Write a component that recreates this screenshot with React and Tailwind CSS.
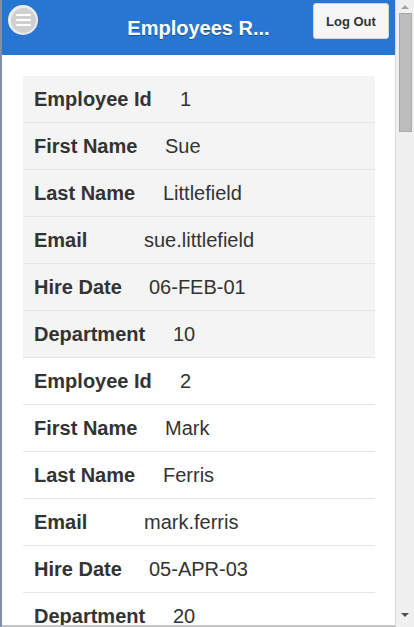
const employees = [
  { id: 1, first: 'Sue', last: 'Littlefield', email: 'sue.littlefield', hire: '06-FEB-01', dept: 10 },
  { id: 2, first: 'Mark', last: 'Ferris', email: 'mark.ferris', hire: '05-APR-03', dept: 20 },
];

// label widths keep the value columns where the original puts them
const fields = [
  { key: 'id', label: 'Employee Id', w: 'w-[146px]' },
  { key: 'first', label: 'First Name', w: 'w-[131px]' },
  { key: 'last', label: 'Last Name', w: 'w-[129px]' },
  { key: 'email', label: 'Email', w: 'w-[110px]' },
  { key: 'hire', label: 'Hire Date', w: 'w-[115px]' },
  { key: 'dept', label: 'Department', w: 'w-[139px]' },
];

function MenuButton() {
  return (
    <div className="w-[30px] h-[30px] rounded-full bg-[#ececec] flex items-center justify-center">
      <div className="w-[25px] h-[25px] rounded-full bg-[#d0d0d0] flex flex-col items-center justify-center gap-[3px]">
        <span className="block w-[15px] h-[2px] bg-white rounded" />
        <span className="block w-[15px] h-[2px] bg-white rounded" />
        <span className="block w-[15px] h-[2px] bg-white rounded" />
      </div>
    </div>
  );
}

function Header() {
  return (
    <div className="relative h-[55px] shrink-0 bg-[#2777d2] flex items-center justify-center">
      <div className="absolute left-[6px] top-[5px]">
        <MenuButton />
      </div>
      <h1 className="text-white text-[20px] font-bold leading-none [text-shadow:0_1px_0_#1d4f8a]">
        Employees R...
      </h1>
      <button className="absolute right-[6px] top-[3px] w-[76px] h-[36px] bg-[#f6f6f6] border border-[#d4d4d4] rounded-[3px] text-[#333] text-[13px] font-bold leading-none">
        Log Out
      </button>
    </div>
  );
}

function Record({ emp, shaded }) {
  return (
    <div className={shaded ? 'bg-[#f4f4f4]' : 'bg-white'}>
      {fields.map((f) => (
        <div
          key={f.key}
          className="h-[47px] flex items-center pl-[11px] border-b border-[#e6e6e6] text-[20px] text-[#333]"
        >
          <span className={`${f.w} font-bold shrink-0`}>{f.label}</span>
          <span>{emp[f.key]}</span>
        </div>
      ))}
    </div>
  );
}

function Scrollbar() {
  return (
    <div className="w-[19px] h-full shrink-0 bg-[#f0f0f0] border-l border-[#dadada] flex flex-col items-center">
      <div className="h-[13px] flex items-center">
        <span className="block w-0 h-0 border-x-[4px] border-x-transparent border-b-[4px] border-b-[#a3a3a3]" />
      </div>
      <div className="w-[13px] h-[119px] bg-[#bcbcbc] border border-[#a9a9a9]" />
      <div className="flex-1" />
      <div className="h-[16px] flex items-start pt-[2px]">
        <span className="block w-0 h-0 border-x-[4px] border-x-transparent border-t-[4px] border-t-[#505050]" />
      </div>
    </div>
  );
}

export default function App() {
  return (
    <div className="w-[414px] h-[627px] flex overflow-hidden bg-white font-['Liberation_Sans',Arial,sans-serif]">
      <div className="w-[2px] h-full shrink-0 bg-[#7f90a8]" />
      <div className="flex-1 h-full flex flex-col overflow-hidden border-b-2 border-[#c6c6c6]">
        <Header />
        <div className="pt-[21px] pl-[21px] pr-[20px]">
          {employees.map((emp, i) => (
            <Record key={emp.id} emp={emp} shaded={i === 0} />
          ))}
        </div>
      </div>
      <Scrollbar />
    </div>
  );
}
